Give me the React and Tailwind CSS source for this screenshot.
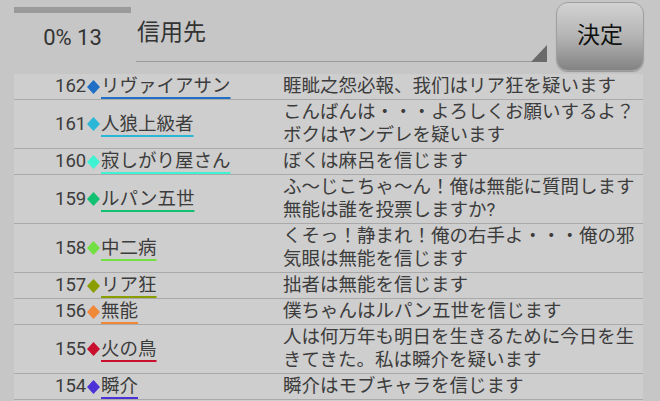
import React from "react";

const rows = [
  { n: 162, name: "リヴァイアサン", c: "#1f6fc6", t: ["睚眦之怨必報、我们はリア狂を疑います"] },
  { n: 161, name: "人狼上級者", c: "#2ab6d6", t: ["こんばんは・・・よろしくお願いするよ？", "ボクはヤンデレを疑います"] },
  { n: 160, name: "寂しがり屋さん", c: "#3ef2d2", t: ["ぼくは麻呂を信じます"] },
  { n: 159, name: "ルパン五世", c: "#12c072", t: ["ふ〜じこちゃ〜ん！俺は無能に質問します", "無能は誰を投票しますか?"] },
  { n: 158, name: "中二病", c: "#72e042", t: ["くそっ！静まれ！俺の右手よ・・・俺の邪", "気眼は無能を信じます"] },
  { n: 157, name: "リア狂", c: "#8a9e00", t: ["拙者は無能を信じます"] },
  { n: 156, name: "無能", c: "#f0883a", t: ["僕ちゃんはルパン五世を信じます"] },
  { n: 155, name: "火の鳥", c: "#c8102e", t: ["人は何万年も明日を生きるために今日を生", "きてきた。私は瞬介を疑います"] },
  { n: 154, name: "瞬介", c: "#4a32d6", t: ["瞬介はモブキャラを信じます"] },
  { n: 153, name: "", c: "#888888", t: [""] },
];

export default function App() {
  return (
    <div
      className="w-[660px] h-[401px] overflow-hidden bg-[#c6c6c6] text-[#3c3c3c]"
      style={{ fontFamily: "Roboto, 'Noto Sans CJK JP', sans-serif" }}
    >
      {/* header */}
      <div className="h-[74px] flex pl-[14px]">
        <div className="w-[117px] shrink-0 flex flex-col items-center">
          <div className="mt-[7px] h-[6px] w-full bg-[#9a9a9a]" />
          <div className="mt-[12px] text-[22px] leading-[26px] text-[#333]">0% 13</div>
        </div>
        <div className="ml-[5px] w-[411px] shrink-0 h-[62px] relative border-b border-[#9c9c9c]">
          <div className="pl-px pt-[17px] text-[23px] leading-[32px] text-[#333]">信用先</div>
          <svg className="absolute right-0 bottom-[-1px]" width="16" height="17" viewBox="0 0 16 17">
            <polygon points="16,0 16,17 0,17" fill="#6a6a6a" />
          </svg>
        </div>
        <div className="ml-[9px] mt-[2px] w-[88px] shrink-0 h-[69px] rounded-[12px] border border-[#a0a0a0] bg-gradient-to-b from-[#d2d2d2] via-[#b4b4b4] to-[#838383] flex items-center justify-center text-[23px] text-[#111] shadow-[0_1px_1px_rgba(0,0,0,0.25)]">
          決定
        </div>
      </div>

      {/* list */}
      <div className="ml-[14px] w-[629px] bg-[#cecece]">
        {rows.map((r) => (
          <div key={r.n} className="flex border-b border-[#a9a9a9]">
            <div className="w-[255px] shrink-0 pl-[41px] flex items-center text-[18.5px] leading-[23px]">
              {r.name && (
                <>
                  <span className="w-[32px]">{r.n}</span>
                  <svg width="13" height="14" viewBox="0 0 13 14" className="mr-[1px]">
                    <polygon points="6.5,0 13,7 6.5,14 0,7" fill={r.c} />
                  </svg>
                  <span
                    className="underline decoration-2 underline-offset-[5px]"
                    style={{ textDecorationColor: r.c }}
                  >
                    {r.name}
                  </span>
                </>
              )}
            </div>
            <div className="flex-1 min-w-0 pl-[14px] py-px text-[18.5px] leading-[23px]">
              {r.t.map((l, i) => (
                <div key={i} className="whitespace-nowrap h-[23px]">
                  {l}
                </div>
              ))}
            </div>
          </div>
        ))}
      </div>
    </div>
  );
}
